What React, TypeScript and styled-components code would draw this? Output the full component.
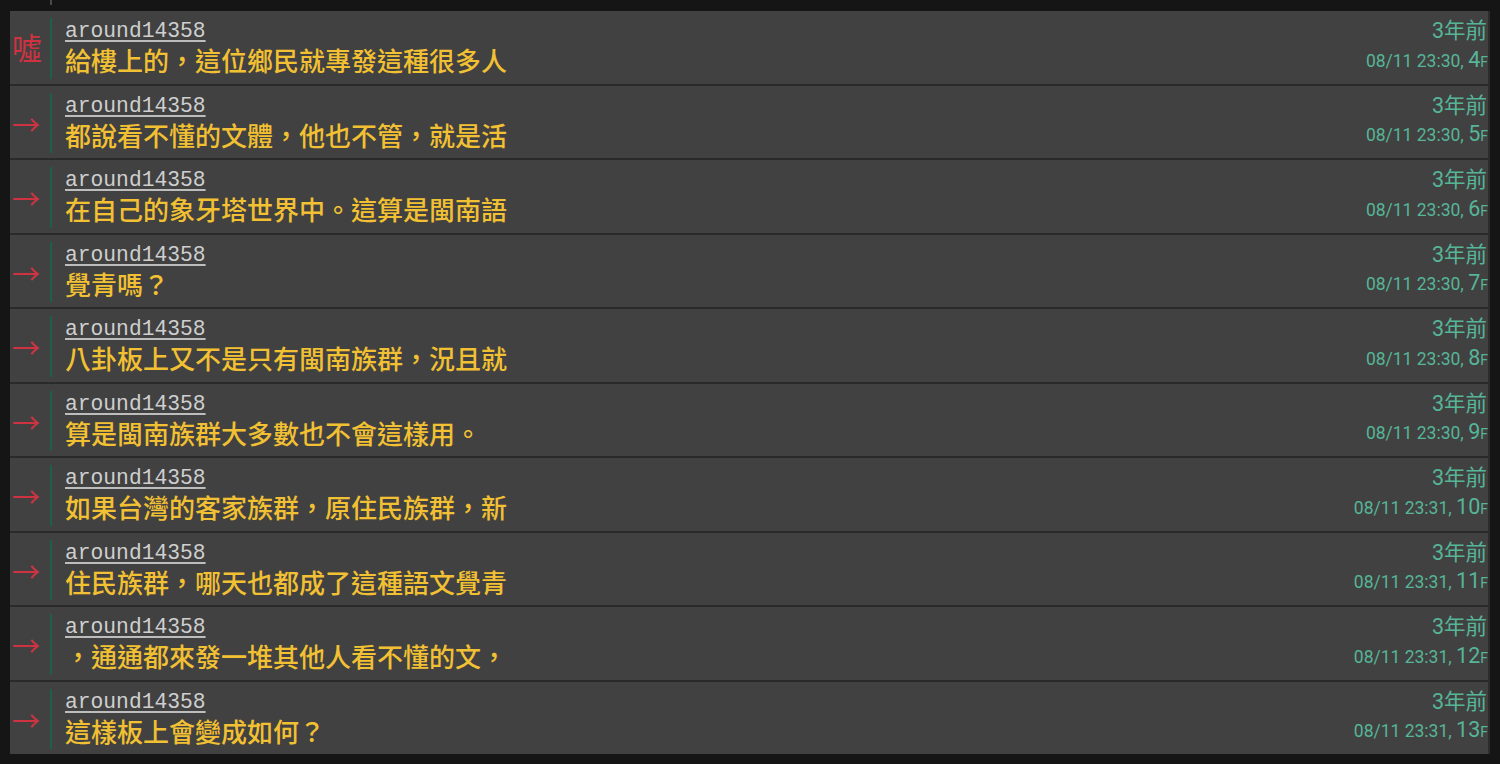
import React from "react";
import styled, { createGlobalStyle } from "styled-components";

const Global = createGlobalStyle`
  html, body { margin: 0; padding: 0; background: #151515; }
  body { width: 1500px; height: 764px; overflow: hidden; }
`;

const Page = styled.div`
  width: 1500px;
  height: 764px;
  display: flex;
  flex-direction: column;
  padding: 0 10px 0 10px;
  box-sizing: border-box;
`;

const TopStrip = styled.div`
  height: 11px;
  display: flex;
`;

const Tick = styled.div`
  margin-left: 40px;
  width: 2px;
  height: 5px;
  background: #4a4a4a;
`;

const List = styled.div`
  width: 1480px;
  display: flex;
  flex-direction: column;
  gap: 2px;
  background: #2a2a2a;
  border-right: 2px solid #2c2c2c;
  box-sizing: border-box;
`;

const Row = styled.div`
  height: 72.5px;
  display: flex;
  align-items: stretch;
  background: #414141;
  overflow: hidden;
`;

const Tag = styled.div<{ $arrow?: boolean }>`
  width: 40px;
  flex: none;
  display: flex;
  align-items: center;
  justify-content: flex-start;
  padding-left: 2px;
  padding-top: ${(p) => (p.$arrow ? "4px" : "0")};
  padding-bottom: ${(p) => (p.$arrow ? "0" : "3px")};
  color: #cf3341;
  font-family: "Noto Sans CJK TC", sans-serif;
  font-size: ${(p) => (p.$arrow ? "28px" : "30px")};
  line-height: 1;
  box-sizing: border-box;
`;

const Body = styled.div`
  flex: 1;
  margin: 7px 0 5px 0;
  border-left: 2px solid #1d5f49;
  padding-left: 13px;
  display: flex;
  flex-direction: column;
  min-width: 0;
`;

const User = styled.div`
  font-family: "Liberation Mono", monospace;
  font-size: 21.3px;
  line-height: 1;
  color: #cfcfcf;
  text-decoration: underline;
  text-decoration-color: #bdbdbd;
  text-underline-offset: 3px;
  margin-top: 3px;
`;

const Text = styled.div`
  font-family: "Noto Sans CJK TC", sans-serif;
  font-weight: 500;
  font-size: 26px;
  line-height: 1;
  color: #f2c033;
  margin-top: 5px;
  white-space: nowrap;
`;

const Meta = styled.div`
  flex: none;
  display: flex;
  flex-direction: column;
  align-items: flex-end;
  padding-top: 9px;
  color: #56b597;
  font-family: Roboto, "Noto Sans CJK TC", sans-serif;
`;

const Ago = styled.div`
  font-family: Roboto, "Noto Sans CJK TC", sans-serif;
  font-size: 21.5px;
  line-height: 1;
  margin-right: 1px;
`;

const Stamp = styled.div`
  margin-top: 7px;
  font-size: 17.5px;
  line-height: 1;
  white-space: nowrap;
  display: flex;
  align-items: baseline;
`;

const Floor = styled.span`
  font-size: 21.5px;
`;

const FSuffix = styled.span`
  font-size: 14px;
`;

type Item = { tag: "噓" | "→"; text: string; time: string; floor: number };

const items: Item[] = [
  { tag: "噓", text: "給樓上的，這位鄉民就專發這種很多人", time: "08/11 23:30", floor: 4 },
  { tag: "→", text: "都說看不懂的文體，他也不管，就是活", time: "08/11 23:30", floor: 5 },
  { tag: "→", text: "在自己的象牙塔世界中。這算是閩南語", time: "08/11 23:30", floor: 6 },
  { tag: "→", text: "覺青嗎？", time: "08/11 23:30", floor: 7 },
  { tag: "→", text: "八卦板上又不是只有閩南族群，況且就", time: "08/11 23:30", floor: 8 },
  { tag: "→", text: "算是閩南族群大多數也不會這樣用。", time: "08/11 23:30", floor: 9 },
  { tag: "→", text: "如果台灣的客家族群，原住民族群，新", time: "08/11 23:31", floor: 10 },
  { tag: "→", text: "住民族群，哪天也都成了這種語文覺青", time: "08/11 23:31", floor: 11 },
  { tag: "→", text: "，通通都來發一堆其他人看不懂的文，", time: "08/11 23:31", floor: 12 },
  { tag: "→", text: "這樣板上會變成如何？", time: "08/11 23:31", floor: 13 },
];

export default function App() {
  return (
    <>
      <Global />
      <Page>
        <TopStrip>
          <Tick />
        </TopStrip>
        <List>
          {items.map((it) => (
            <Row key={it.floor}>
              <Tag $arrow={it.tag === "→"}>{it.tag}</Tag>
              <Body>
                <User>around14358</User>
                <Text>{it.text}</Text>
              </Body>
              <Meta>
                <Ago>3年前</Ago>
                <Stamp>
                  {it.time},&nbsp;<Floor>{it.floor}</Floor>
                  <FSuffix>F</FSuffix>
                </Stamp>
              </Meta>
            </Row>
          ))}
        </List>
      </Page>
    </>
  );
}
